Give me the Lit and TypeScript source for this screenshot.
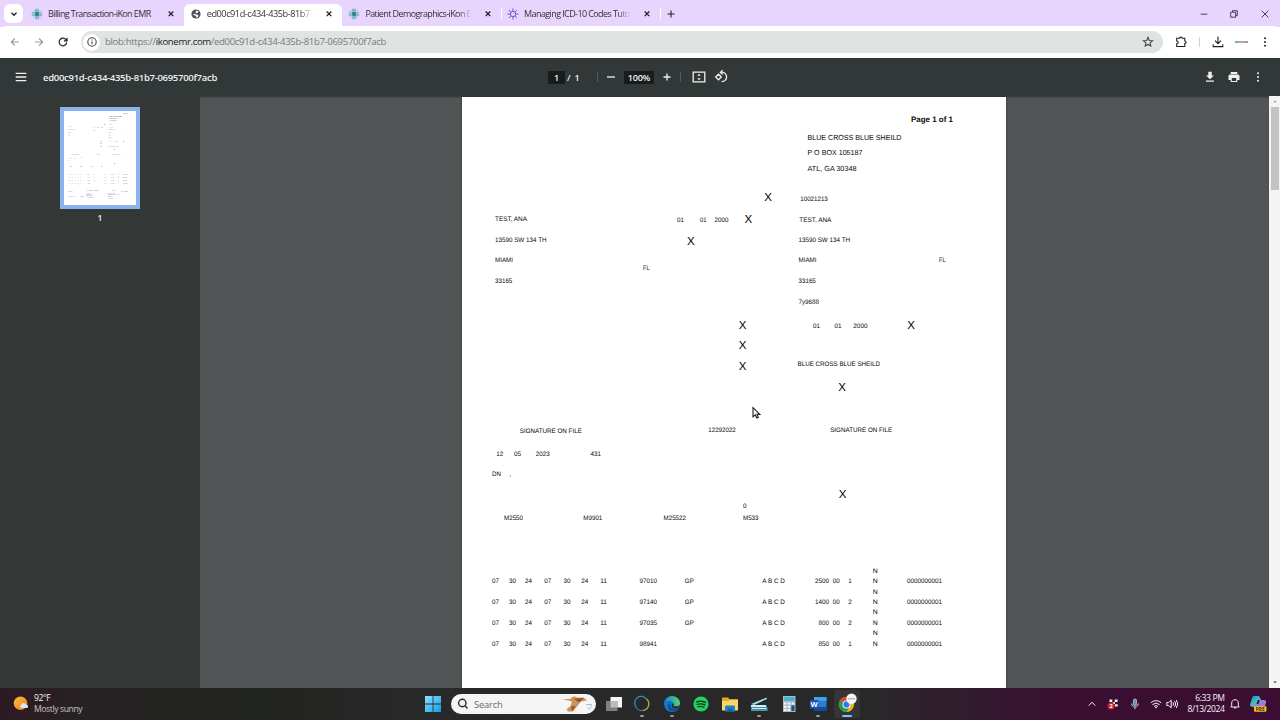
import { LitElement, html, svg, css } from 'lit';
import { customElement, property } from 'lit/decorators.js';
import { classMap } from 'lit/directives/class-map.js';

// x, baseline, text, rendered width, font size, bold
type Mark = [number, number, string, number?, number?, boolean?];

const header: Mark[] = [
  [449, 25.7, 'Page 1 of 1', 42, 8, true],
  [345.5, 43, 'BLUE CROSS BLUE SHEILD', 94, 7.4],
  [345.5, 58.5, 'P O BOX 105187', 55, 7.4],
  [345.5, 74.5, 'ATL, GA 30348', 49, 7.4],
  [338.3, 104.5, '10021213', 27.5],
  [33, 124.5, 'TEST, ANA', 32],
  [215, 125.6, '01', 7],
  [238, 125.6, '01', 6.5],
  [252.5, 125.6, '2000', 14],
  [337.3, 125.6, 'TEST, ANA', 32],
  [33, 145.7, '13590 SW 134 TH', 51.5],
  [336.5, 145.7, '13590 SW 134 TH', 51.5],
  [33, 165.7, 'MIAMI', 18],
  [336.5, 165.7, 'MIAMI', 18],
  [477, 165.7, 'FL', 6.5],
  [181, 173.7, 'FL', 6.5],
  [33, 186.5, '33165', 17.3],
  [336.5, 186.5, '33165', 17.3],
  [336.5, 207.3, '7y9688', 20.5],
  [351, 231.7, '01', 7],
  [372.5, 231.7, '01', 7],
  [391.3, 231.7, '2000', 14.3],
  [335.5, 269.7, 'BLUE CROSS BLUE SHEILD', 82.5],
  [57.8, 336.5, 'SIGNATURE ON FILE', 62],
  [246.3, 335.7, '12292022', 27.5],
  [368.2, 335.7, 'SIGNATURE ON FILE', 62],
  [34.3, 359.7, '12', 7],
  [52, 359.7, '05', 7],
  [73.7, 359.7, '2023', 14],
  [128.5, 359, '431', 10.5],
  [30, 379, 'DN', 9],
  [47.5, 379, ',', 1.7],
  [281, 411.3, '0'],
  [42, 423.3, 'M2550', 19],
  [121.3, 423.3, 'M9901', 19],
  [201.5, 423.3, 'M25522', 22.5],
  [281, 423.3, 'M533', 15.5],
];

const checks: [number, number][] = [
  [306, 104.3], [286.3, 126.2], [228.8, 147.7], [280.5, 232.2], [449.2, 232.2],
  [280.5, 252.3], [280.5, 273], [380, 293.8], [380.7, 401.2],
];

const lines = [
  { y: 486.4, code: '97010', mod: 'GP', charge: '2500', units: '1' },
  { y: 507.6, code: '97140', mod: 'GP', charge: '1400', units: '2' },
  { y: 527.8, code: '97035', mod: 'GP', charge: '800', units: '2' },
  { y: 549, code: '98941', mod: '', charge: '850', units: '1' },
];

const lineMarks: Mark[] = lines.flatMap(({ y, code, mod, charge, units }): Mark[] => [
  [410.8, y - 10.4, 'N', 5],
  [30, y, '07', 7], [47, y, '30', 7], [63, y, '24', 7],
  [82.3, y, '07', 7], [101.5, y, '30', 7], [119.3, y, '24', 7],
  [138.2, y, '11', 6.7],
  [177.5, y, code, 17.5],
  ...(mod ? [[222.8, y, mod, 9] as Mark] : []),
  [300.3, y, 'A B C D', 22.5],
  [367 - charge.length * 3.5, y, charge, charge.length * 3.5],
  [370.7, y, '00', 7],
  [386.3, y, units],
  [410.8, y, 'N', 5],
  [445, y, '0000000001', 35],
]);

// lower part of the claim form, only visible in the thumbnail
const footer: Mark[] = [
  [30, 612, '264521877', 40], [165, 605, '1234567890', 95], [365, 605, '5350 00', 24],
  [435, 612, '0 00', 48], [170, 627, 'CLINIC', 24], [170, 636, '8400 SW 8TH ST', 55],
  [170, 645, 'MIAMI FL', 45], [30, 650, 'SIGNATURE ON FILE', 56], [125, 650, '080124', 30],
  [170, 655, '1225055', 50], [330, 627, 'IKON CLINIC', 55], [330, 636, '8400 SW 8TH STREET', 95],
  [330, 650, 'MIAMI FL', 40], [335, 665, '1225055', 35],
];

@customElement('claim-page')
export class ClaimPage extends LitElement {
  @property({ type: Boolean }) full = false;

  static styles = css`
    :host { display: block; background: #fff; }
    :host([full]) svg { opacity: 0.8; }
    svg { display: block; width: 100%; }
    text { font-family: 'Liberation Sans', Arial, sans-serif; fill: #080808; text-rendering: geometricPrecision; }
    .check { font-size: 11.5px; text-anchor: middle; fill: #000; }
    .bold { font-weight: bold; }
  `;

  render() {
    const marks = [...header, ...lineMarks, ...(this.full ? footer : [])];
    return html`
      <svg viewBox="0 0 544 704">
        ${marks.map(([x, y, label, width, size, bold]) => svg`
          <text class=${classMap({ bold: !!bold })} x=${x} y=${y - 0.3}
            font-size=${size ?? 6.5}
            textLength=${width ?? label.length * 3.5} lengthAdjust="spacingAndGlyphs">${label}</text>`)}
        ${checks.map(([x, y]) => svg`
          <text class="check" x=${x} y=${y}>X</text>`)}
      </svg>
    `;
  }
}

const glyphs: Record<string, unknown> = {
  chevron: svg`<path d="M5.5 6.8 8 9.3 10.5 6.8" />`,
  close: svg`<path d="M5.7 5.5 10.3 10.1M10.3 5.5 5.7 10.1" />`,
  plus: svg`<path d="M8 4.5V11.5M4.5 8H11.5" />`,
  minus: svg`<path d="M4 8H12" />`,
  back: svg`<path d="M12 8H4.5M8 4.3 4.3 8 8 11.7" />`,
  forward: svg`<path d="M4 8H11.5M8 4.3 11.7 8 8 11.7" />`,
  reload: svg`<path d="M11.7 8.4A3.8 3.8 0 1 1 10.8 5.5L11.8 6.6M12 3.7V6.8H8.9" />`,
  info: svg`<circle cx="8" cy="8" r="4.2" /><path d="M8 7.5V10.2M8 5.6V6.5" />`,
  star: svg`<path d="M8 3.5 9.3 6.5 12.5 6.8 10.1 8.9 10.8 12 8 10.4 5.2 12 5.9 8.9 3.5 6.8 6.7 6.5Z" />`,
  puzzle: svg`<path d="M3.7 4.2H6.5C6.5 2.7 9.2 2.7 9.2 4.2H11.8V7C13.5 7 13.5 9.6 11.8 9.6V12.5H3.7V9.8C5.7 9.8 5.7 7 3.7 7Z" />`,
  download: svg`<path d="M8 2.6V9.4M5 6.6 8 9.6 11 6.6M3.2 10.3V12.6H12.8V10.3" />`,
  dots: svg`<g class="solid"><circle cx="8" cy="4.2" r="1" /><circle cx="8" cy="8" r="1" /><circle cx="8" cy="11.8" r="1" /></g>`,
  menu: svg`<path d="M2.7 4.3H13.3M2.7 8H13.3M2.7 11.7H13.3" />`,
  fit: svg`<path d="M2.2 3.2H13.8V12.8H2.2Z" /><path class="solid" d="M8 4.8 9.7 6.8H6.3ZM8 11.2 6.3 9.2H9.7Z" />`,
  rotate: svg`<path d="M7.6 3.4A4.7 4.7 0 1 1 8.6 12.6M9.6 1.3 7.4 3.4 9.6 5.5M5.5 5.2 8.3 8 5.5 10.8 2.7 8Z" />`,
  save: svg`<path class="solid" d="M6.3 2.8H9.7V6.5H12L8 10.3 4 6.5H6.3ZM4 11.5H12V12.8H4Z" />`,
  print: svg`<path class="solid" fill-rule="evenodd" d="M4.7 3H11.3V5H4.7ZM4 5.6H12Q13.5 5.6 13.5 7.1V11H11.3V13H4.7V11H2.5V7.1Q2.5 5.6 4 5.6ZM5.8 9V12H10.2V9Z" />`,
  minimize: svg`<path d="M4.7 8.2H11.3" />`,
  restore: svg`<path d="M4.7 6.2H9.6V11.2H4.7ZM6.5 6V4.7H11.3V9.6H9.8" />`,
  exit: svg`<path d="M4.6 4.6 11.4 11.4M11.4 4.6 4.6 11.4" />`,
  caret: svg`<path d="M4.8 9.6 8 6.2 11.2 9.6" />`,
  search: svg`<circle cx="7.3" cy="7" r="3.7" /><path d="M10 9.8 12.5 12.5" />`,
  globe: svg`<circle cx="8" cy="8" r="4.6" class="solid" /><path class="land" d="M8.4 4.6 10.6 5.2 9.4 6.9 7.4 7.1 7.2 8.4 9.2 8.6 10.6 9.7 9.4 11.5 8.4 11.3 7.8 10.1 4.6 8.5 5.4 8.2 7 8Z" />`,
  cross: svg`<g class="solid"><path fill="#5bb5c0" d="M6.3 2.8H7.8V13.2H6.3ZM8.3 2.8H9.8V13.2H8.3Z" /><path fill="#66b6c0" d="M2.8 6.2H13.2V7.6H2.8ZM2.8 8.3H13.2V9.8H2.8Z" /><path fill="#34798b" d="M6.3 6.2H9.8V9.8H6.3Z" /><path fill="#9bc6d6" d="M4.2 4.3H5.7V5.6H4.2ZM10.3 4.3H11.8V5.6H10.3ZM4.2 10.4H5.7V11.7H4.2ZM10.3 10.4H11.8V11.7H10.3Z" /></g>`,
  burst: svg`<circle cx="8" cy="8" r="2.6" /><path d="M8 2.4V5M8 11V13.6M2.4 8H5M11 8H13.6M4 4 5.9 5.9M10.1 10.1 12 12M4 12 5.9 10.1M10.1 5.9 12 4" />`,
  mic: svg`<rect x="6.4" y="3" width="3.2" height="6.5" rx="1.6" fill="#6f8fb4" stroke="#9cb9d6" /><path stroke="#b9cbe0" d="M4.6 7.5C4.6 12.2 11.4 12.2 11.4 7.5M8 11V13.2" />`,
  wifi: svg`<path d="M2.8 6.7Q8 2.6 13.2 6.7M4.4 8.6Q8 5.7 11.6 8.6M6.1 10.4Q8 8.8 9.9 10.4" /><circle class="solid" cx="8" cy="11.6" r=".8" />`,
  sound: svg`<path d="M2.8 6.5H4.6L7.2 4.2V11.8L4.6 9.5H2.8ZM8.9 6.3Q10.2 8 8.9 9.7M10.6 5.1Q12.8 8 10.6 10.9M12.3 4Q15.2 8 12.3 12" />`,
  bell: svg`<path d="M3.8 11H12.2L11.3 9.4V7C11.3 2.6 4.7 2.6 4.7 7V9.4ZM6.8 11.4Q8 13.4 9.2 11.4" />`,
  dropbox: svg`<g class="solid"><path d="M4.5 3.6H7.3V6H4.5ZM9.7 3.6H12.5V6H9.7ZM7.8 6.2H10V8H7.8ZM9.9 8.2H12.7V10.4H9.9Z" /></g><circle cx="6" cy="10" r="3.5" fill="#d5202b" stroke="none" /><text x="6" y="12" class="badge">2</text>`,
  weather: svg`<defs><linearGradient id="sun" x2="1" y2="1"><stop stop-color="#f8bf3b" /><stop offset="1" stop-color="#ee7e1d" /></linearGradient></defs><circle cx="7.5" cy="7.2" r="6.8" fill="url(#sun)" stroke="none" /><path fill="#d7e4fa" stroke="none" d="M8.3 12A2 2 0 0 1 8.2 8.4 2.7 2.7 0 0 1 13 8.5 1.9 1.9 0 0 1 14.2 12Z" />`,
  windows: svg`<defs><linearGradient id="win" x2="1" y2="1"><stop stop-color="#8be3fb" /><stop offset="1" stop-color="#139be8" /></linearGradient></defs><path fill="url(#win)" stroke="none" d="M0 0H7.6V7.6H0ZM8.4 0H16V7.6H8.4ZM0 8.4H7.6V16H0ZM8.4 8.4H16V16H8.4Z" />`,
  tasks: svg`<g stroke="none"><rect x="4.5" y="1" width="11.5" height="10.5" fill="#f5f5f5" /><rect x="0" y="5" width="11.5" height="10" fill="#808080" /><rect x="4.5" y="5" width="7" height="6.5" fill="#bdbdbd" /></g>`,
  ring: svg`<g stroke-width="1.3"><path stroke="#2693b5" d="M12.5 3A6.5 6.5 0 0 0 2 11" /><path stroke="#a3bf45" d="M12.5 3A6.5 6.5 0 0 1 9 14.4" /><path stroke="#247c83" d="M9 14.4A6.5 6.5 0 0 1 2 11" /></g>`,
  edge: svg`<defs><linearGradient id="edge" x2="1"><stop stop-color="#1783d4" /><stop offset="1" stop-color="#58d667" /></linearGradient></defs><g stroke="none"><circle cx="8" cy="8" r="8" fill="#1674c9" /><path fill="url(#edge)" d="M.2 7.2C1.2-2 15.2-2 16 7 16 10.8 10.4 11.2 9.4 9.8 11 7.5 8.6 4.8 5.8 4.8 3 4.8.8 6 .2 7.2Z" /><path fill="#0d4d9a" d="M6.2 7C5 11.5 9 14.2 13.8 12.6 10.5 17.5 2.6 15 4 9.3 4.4 8 5.2 7.2 6.2 7Z" /><path fill="#292a2a" d="M9.4 9.8C10.8 10.9 13.4 10.9 15.4 9.2L14.2 12C11.2 13.3 8 12.2 7.6 9.8 7.5 8 8.6 7.4 9.8 8Z" /></g>`,
  spotify: svg`<circle cx="8" cy="8" r="7.6" fill="#23d262" stroke="none" /><g stroke="#123d20" stroke-linecap="round"><path stroke-width="1.6" d="M3.7 5.8Q8.3 4.3 12.5 6.5" /><path stroke-width="1.4" d="M4.2 8.4Q8.2 7.2 11.8 9" /><path stroke-width="1.1" d="M4.6 10.8Q8 9.8 11 11.4" /></g>`,
  folder: svg`<g stroke="none"><path fill="#e8a829" d="M0 1.5H6L7.5 3.2H16V13H0Z" /><path fill="#fcd568" d="M0 5H6.5L8 3.8H16V14.5H0Z" /><path fill="#1b83c8" d="M3 15.5V10.5Q3 9.5 4 9.5H12Q13 9.5 13 10.5V15.5Z" /><path fill="#14639c" d="M5.5 12.5H10.5V15.5H5.5Z" /></g>`,
  scanner: svg`<g stroke="none"><path fill="#9edbe8" d="M0 8 15.5 1.5 16 3 3 9Z" /><path fill="#d8edf0" d="M0 9H15L16.5 14.5H0Z" /><path fill="#3790ac" d="M0 11H16.5V14.5H0Z" /><path fill="#c9edf5" d="M1 12H15.5V13H1Z" /></g>`,
  calc: svg`<g stroke="none"><rect x="2" y="0" width="12.5" height="16" fill="#a9bac4" /><rect x="3" y="1" width="10.5" height="4" fill="#48b4d4" /><path fill="#f3f6f7" d="M3 6.4H5.6V8.6H3ZM6.7 6.4H9.3V8.6H6.7ZM3 9.7H5.6V11.9H3ZM6.7 9.7H9.3V11.9H6.7ZM3 13H5.6V15H3ZM6.7 13H9.3V15H6.7ZM10.7 6.4H13.3V8.6H10.7Z" /><path fill="#274d79" d="M10.4 9.4H13.5V15H10.4Z" /></g>`,
  word: svg`<g stroke="none"><rect x="4" y="1" width="12.5" height="14" rx="1" fill="#2b7cd3" /><path fill="#41a5ee" d="M4 1H16.5V4.8H4Z" /><path fill="#164a9c" d="M4 11H16.5V15H4Z" /><rect x="0" y="4" width="8.5" height="8.5" rx=".8" fill="#1855b4" /></g><text x="4.2" y="10.8" class="word">W</text>`,
  chrome: svg`<g stroke="none"><circle cx="7.5" cy="8.4" r="7.6" fill="#ebb927" /><path fill="#dc4133" d="M7.5 8.4.9 4.6A7.6 7.6 0 0 1 14.1 4.6H7.5Z" /><path fill="#299b4d" d="M7.5 8.4.9 4.6A7.6 7.6 0 0 0 7.5 16L10.8 10.3Z" /><circle cx="7.5" cy="8.4" r="4" fill="#fff" /><circle cx="7.5" cy="8.4" r="3.1" fill="#297be6" /><circle cx="12.5" cy="2.8" r="5.2" fill="#f5f5f5" /><path fill="#d38b95" d="M9 2.3H16V3.3H9Z" /></g>`,
  copilot: svg`<defs><linearGradient id="cop" x2="1" y2="1"><stop stop-color="#2185df" /><stop offset=".45" stop-color="#3fc5b1" /><stop offset=".7" stop-color="#a573e6" /><stop offset="1" stop-color="#ed659d" /></linearGradient></defs><g stroke="none"><path fill="url(#cop)" d="M4 0H9L11 4H14Q16.5 4 16 7L14.5 11H3Q-.5 11 .2 8L2 2Q2.5 0 4 0Z" /><path fill="#3a0c32" d="M7.8 4 6.5 8H8.5L9.7 4Z" /><rect x="4" y="10.3" width="12.4" height="5.4" rx="1" fill="#f3c52b" /></g><text x="10.2" y="14.8" class="pre">PRE</text>`,
  bird: svg`<g stroke="none"><path fill="#cf9359" d="M0 3.2 8 3 10 1.2Q12.5-.4 15 1.5L22 1.8 25 4.6 18.8 5.4 15.6 9.8 11 15.4 6 15.5 4.6 13.2 8.5 10 10 5.7 7.4 4.7Z" /><path fill="#8d552d" d="M12 3 22 1.8 17.2 6.4ZM9 10.5 13.6 10 10.3 15Z" /></g><path stroke="#b4b6bb" stroke-width=".9" d="M24 8.5H29.5L28 12.8M25.5 11.5 28 14" />`,
  up: svg`<path class="solid" d="M8 6.6 10.4 9.2H5.6Z" />`,
  down: svg`<path class="solid" d="M8 9.2 10.4 6.6H5.6Z" />`,
  pointer: svg`<path fill="#fff" stroke="#222" d="M4 2.5V11.8L6.3 9.9 7.9 13.1 9.3 12.4 8 9.4H10.9Z" />`,
};

@customElement('ui-icon')
export class UiIcon extends LitElement {
  @property() name = '';
  @property() box = '0 0 16 16';

  static styles = css`
    :host { display: block; flex: none; width: 16px; height: 16px; }
    svg { display: block; width: 100%; height: 100%; overflow: visible; fill: none; stroke: currentColor; stroke-width: var(--stroke, 1.1); }
    .solid { fill: currentColor; stroke: none; }
    .land { fill: #fff; stroke: none; }
    text { font-family: 'Open Sans', sans-serif; font-weight: 700; fill: #fff; stroke: none; text-anchor: middle; }
    .badge { font-size: 5.5px; }
    .word { font-size: 7.5px; }
    .pre { font-size: 4.8px; fill: #3a1c20; }
  `;

  render() {
    return html`<svg viewBox=${this.box}>${glyphs[this.name]}</svg>`;
  }
}

const tabs = [
  { icon: 'cross', title: 'Billing Transaction-iKon EMR' },
  { icon: 'globe', title: 'ed00c91d-c434-435b-81b7-069', active: true },
  { icon: 'cross', title: 'Patient Demographics-iKon EMR', ruled: true },
  { icon: 'burst', title: 'Managing ICD-10 Codes Tutoria', ruled: true },
];

const apps = [
  { icon: 'tasks' },
  { icon: 'ring', running: true },
  { icon: 'edge', running: true },
  { icon: 'spotify' },
  { icon: 'folder' },
  { icon: 'scanner', running: true },
  { icon: 'calc' },
  { icon: 'word', running: true },
  { icon: 'chrome', running: true, active: true },
];

@customElement('app-root')
export class AppRoot extends LitElement {
  static styles = css`
    :host {
      display: flex;
      flex-direction: column;
      position: relative;
      width: 1280px;
      height: 720px;
      overflow: hidden;
      font-family: 'Open Sans', 'Noto Sans', sans-serif;
      font-size: 9.5px;
      color: #353039;
    }

    .tabs {
      display: flex;
      flex: none;
      height: 27px;
      padding-left: 4px;
      box-sizing: border-box;
      background: #e8d5fd;
    }
    .tab-menu {
      display: grid;
      place-items: center;
      width: 19px;
      height: 19px;
      margin: 4px 5px 0 0;
      border-radius: 6px;
      background: #fff;
      color: #222;
      --stroke: 1.4;
    }
    .tab {
      display: flex;
      align-items: center;
      box-sizing: border-box;
      width: 158.7px;
      height: 27px;
      padding: 1px 8px 0 1px;
    }
    .tab.active {
      height: 23px;
      margin: 4px 3px 0 -3px;
      width: 158.7px;
      padding: 0 5px 4px 4px;
      background: #fff;
      border-radius: 6px 6px 0 0;
    }
    .tab.ruled {
      background: linear-gradient(#fff, #fff) right 2px center / 1px 11px no-repeat;
    }
    .tab ui-icon { color: #222; --stroke: 1.3; }
    .tab ui-icon.favicon { color: #605bd8; --stroke: 1; }
    .tab.active ui-icon.favicon { color: #4e5357; }
    .tab-title {
      flex: 1;
      overflow: hidden;
      margin-left: 3px;
      margin-right: 6px;
      padding-bottom: 1px;
      white-space: nowrap;
      font-size: 9px;
      letter-spacing: -0.6px;
    }
    .tab.active .tab-title { font-size: 9.2px; letter-spacing: -0.46px; }
    .tab.cut .tab-title { mask-image: linear-gradient(90deg, #000 86%, transparent 98%); }
    .new-tab { align-self: center; margin-left: 0; color: #222; }
    .window { display: flex; align-items: center; gap: 14.7px; margin-left: auto; padding-right: 7px; --stroke: 0.9; }

    .address {
      display: flex;
      align-items: center;
      flex: none;
      height: 31px;
      padding: 0 7px 1px 7px;
      box-sizing: border-box;
      background: #fff;
      border-radius: 6px 6px 0 0;
      color: #222;
      box-shadow: 0 -4px 0 -3px #fff;
    }
    .nav { display: flex; gap: 8px; width: 74px; --stroke: 1.2; }
    .dim { color: #999; }
    .pill {
      display: flex;
      align-items: center;
      flex: 1;
      height: 22px;
      padding: 0 7px 0 2px;
      box-sizing: border-box;
      border-radius: 11px;
      background: #dfe3e1;
      color: #444;
    }
    .site { display: grid; place-items: center; width: 17px; height: 17px; border-radius: 50%; background: #fff; }
    .url { flex: 1; margin-left: 5px; padding-bottom: 1px; font-size: 9.6px; letter-spacing: -0.35px; color: #777b7a; }
    .url b { font-weight: 400; color: #222; }
    .extensions { display: flex; align-items: center; margin-left: 10px; }
    .rule { width: 1px; height: 10px; background: #d8c8e4; margin: 0 10px; }
    .profile { width: 13px; height: 2px; margin: 0 9px 0 9px; background: linear-gradient(90deg, #71b497, #b4aac0 60%, #c08795); }

    .pdf-bar {
      display: grid;
      grid-template-columns: 548px 1fr auto;
      align-items: center;
      flex: none;
      height: 38px;
      background: #323837;
      color: #f0f1f1;
      --stroke: 1.3;
    }
    .file { display: flex; align-items: center; gap: 14px; padding-left: 13px; font-weight: 600; font-size: 9.5px; letter-spacing: -0.29px; }
    .zoom { display: flex; align-items: center; font-size: 9px; font-weight: 600; letter-spacing: -0.2px; }
    .field { display: grid; place-items: center; height: 13px; background: #181c1c; }
    .field.page { width: 17px; }
    .field.percent { width: 30px; margin: 0 5px; }
    .total { width: 29px; padding-left: 2px; white-space: pre; }
    .bar { width: 1px; height: 10px; margin: 0 5px 0 1px; background: #535858; }
    .bar.wide { margin: 0 10px 0 5px; }
    .turn { margin-left: 5.5px; }
    .actions { display: flex; gap: 8px; padding-right: 14px; }

    .viewer { display: flex; flex: 1; min-height: 0; background: #515555; }
    .thumbs {
      display: flex;
      flex-direction: column;
      align-items: center;
      box-sizing: border-box;
      width: 200px;
      flex: none;
      padding-top: 11px;
      background: #333837;
      color: #f0f0f0;
      font-size: 8.5px;
      font-weight: 600;
    }
    .thumb { width: 72px; height: 94px; padding: 4px; background: #8bb2ea; }
    .thumb claim-page { height: 94px; }
    .page-no { margin-top: 3px; line-height: 12px; }
    .canvas { display: flex; flex: 1; justify-content: center; overflow: hidden; padding: 1px 1px 0 0; box-shadow: inset 0 2px 2px -1px #303434; }
    .canvas claim-page { width: 544px; height: 704px; box-shadow: 0 0 2px #2c3030; }
    .scroll { display: flex; flex-direction: column; align-items: center; width: 11px; flex: none; background: #f4f4f4; }
    .arrow { height: 11px; color: #8a8a8a; }
    .arrow.end { margin-top: auto; color: #333; }
    .thumb-bar { width: 8px; height: 83px; background: #c3c3c3; }

    .taskbar {
      display: grid;
      grid-template-columns: 425px 1fr auto;
      align-items: center;
      flex: none;
      height: 32px;
      background: linear-gradient(90deg, #2d1a22, #252323 8%, #222421 20%, #292929 34%, #292829 68%, #3a0f31 83%, #3b0d32);
      color: #f4f4f4;
    }
    .weather { display: flex; gap: 5px; align-items: center; padding-left: 13px; font-size: 8.6px; line-height: 10.7px; letter-spacing: -0.4px; }
    .weather span { color: #c6c6c6; }
    .launcher { display: flex; align-items: center; }
    .search {
      display: flex;
      align-items: center;
      box-sizing: border-box;
      width: 145px;
      height: 20px;
      margin: 0 5px 0 10px;
      padding: 0 3px 0 4px;
      border-radius: 10px;
      background: #f5f5f6;
      color: #292929;
      --stroke: 1.4;
    }
    .search span { flex: 1; margin-left: 3px; color: #6c6c6c; font-size: 9.4px; letter-spacing: -0.2px; }
    .bird { width: 31px; height: 16px; }
    .app { display: grid; place-items: center; position: relative; width: 26px; height: 28px; margin-right: 3.25px; border-radius: 2px; }
    .app:nth-child(n + 4) { left: -1px; }
    .app.active { background: #353535; }
    .app.running::after { content: ''; position: absolute; bottom: 1px; width: 4px; height: 2px; border-radius: 1px; background: #999; }
    .app.active::after { width: 10px; background: #7fc5f2; }
    .tray { display: flex; align-items: center; padding-right: 14px; --stroke: 1; }
    .hidden-icons { display: flex; gap: 5.5px; margin-right: 5px; }
    .clock { width: 45px; margin-right: 2.5px; font-size: 8.6px; line-height: 10.6px; text-align: right; letter-spacing: -0.4px; white-space: nowrap; }
    .copilot { margin-left: 7px; }

    .pointer { position: absolute; left: 749px; top: 405px; }
  `;

  render() {
    return html`
      <div class="tabs">
        <div class="tab-menu"><ui-icon name="chevron"></ui-icon></div>
        ${tabs.map((tab, i) => html`
          <div class=${classMap({ tab: true, active: !!tab.active, cut: i > 0, ruled: !!tab.ruled })}>
            <ui-icon class="favicon" name=${tab.icon}></ui-icon>
            <span class="tab-title">${tab.title}</span>
            <ui-icon name="close"></ui-icon>
          </div>`)}
        <ui-icon class="new-tab" name="plus"></ui-icon>
        <div class="window">
          <ui-icon name="minimize"></ui-icon>
          <ui-icon name="restore"></ui-icon>
          <ui-icon name="exit"></ui-icon>
        </div>
      </div>

      <div class="address">
        <div class="nav">
          <ui-icon class="dim" name="back"></ui-icon>
          <ui-icon class="dim" name="forward"></ui-icon>
          <ui-icon name="reload"></ui-icon>
        </div>
        <div class="pill">
          <div class="site"><ui-icon name="info"></ui-icon></div>
          <span class="url">blob:https://<b>ikonemr.com</b>/ed00c91d-c434-435b-81b7-0695700f7acb</span>
          <ui-icon name="star"></ui-icon>
        </div>
        <div class="extensions">
          <ui-icon name="puzzle"></ui-icon>
          <div class="rule"></div>
          <ui-icon name="download"></ui-icon>
          <div class="profile"></div>
          <ui-icon name="dots"></ui-icon>
        </div>
      </div>

      <div class="pdf-bar">
        <div class="file"><ui-icon name="menu"></ui-icon>ed00c91d-c434-435b-81b7-0695700f7acb</div>
        <div class="zoom">
          <div class="field page">1</div>
          <div class="total">/  1</div>
          <div class="bar"></div>
          <ui-icon name="minus"></ui-icon>
          <div class="field percent">100%</div>
          <ui-icon name="plus"></ui-icon>
          <div class="bar wide"></div>
          <ui-icon name="fit"></ui-icon>
          <ui-icon class="turn" name="rotate"></ui-icon>
        </div>
        <div class="actions">
          <ui-icon name="save"></ui-icon>
          <ui-icon name="print"></ui-icon>
          <ui-icon name="dots"></ui-icon>
        </div>
      </div>

      <div class="viewer">
        <div class="thumbs">
          <div class="thumb"><claim-page full></claim-page></div>
          <div class="page-no">1</div>
        </div>
        <div class="canvas"><claim-page></claim-page></div>
        <div class="scroll">
          <ui-icon class="arrow" name="up"></ui-icon>
          <div class="thumb-bar"></div>
          <ui-icon class="arrow end" name="down"></ui-icon>
        </div>
      </div>

      <div class="taskbar">
        <div class="weather">
          <ui-icon name="weather"></ui-icon>
          <div>92°F<br /><span>Mostly sunny</span></div>
        </div>
        <div class="launcher">
          <ui-icon name="windows"></ui-icon>
          <div class="search">
            <ui-icon name="search"></ui-icon>
            <span>Search</span>
            <ui-icon class="bird" name="bird" box="0 0 31 16"></ui-icon>
          </div>
          ${apps.map(app => html`
            <div class=${classMap({ app: true, running: !!app.running, active: !!app.active })}>
              <ui-icon name=${app.icon}></ui-icon>
            </div>`)}
        </div>
        <div class="tray">
          <div class="hidden-icons">
            <ui-icon name="caret"></ui-icon>
            <ui-icon name="dropbox"></ui-icon>
            <ui-icon name="mic"></ui-icon>
          </div>
          <ui-icon name="wifi"></ui-icon>
          <ui-icon name="sound"></ui-icon>
          <div class="clock">6:33 PM<br />8/13/2024</div>
          <ui-icon name="bell"></ui-icon>
          <ui-icon class="copilot" name="copilot"></ui-icon>
        </div>
      </div>

      <ui-icon class="pointer" name="pointer"></ui-icon>
    `;
  }
}
